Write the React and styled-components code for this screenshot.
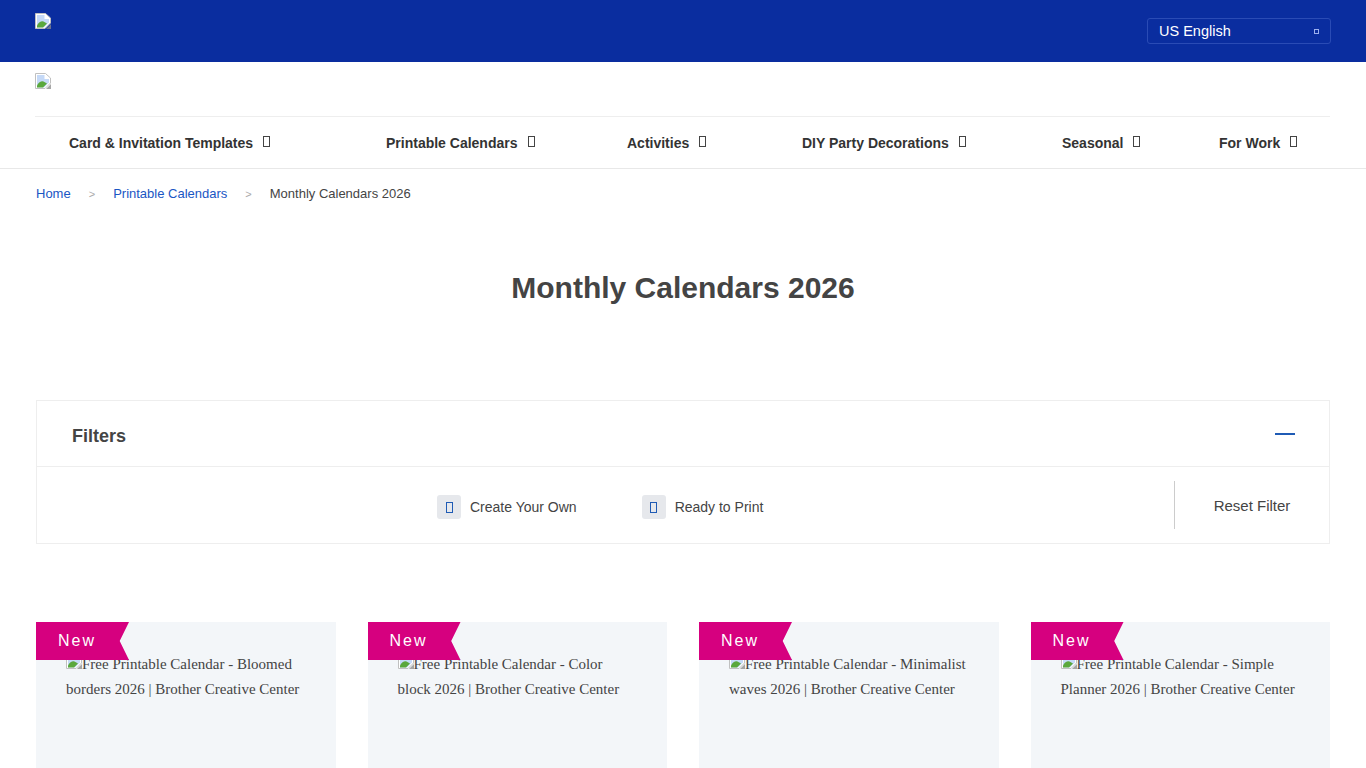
import React from "react";
import styled, { createGlobalStyle } from "styled-components";

const Global = createGlobalStyle`
  html, body { margin: 0; padding: 0; background: #fff; height: 768px; overflow: hidden; }
  body { font-family: "Liberation Sans", Arial, sans-serif; color: #444; }
`;
const TopBar = styled.header`
  height: 62px; background: #0a2d9f; display: flex; justify-content: space-between;
  padding: 13px 35px 0; box-sizing: border-box;
`;
const LangSelect = styled.div`
  width: 184px; height: 26px; margin: 5px 0 0; box-sizing: border-box;
  border: 1px solid #2a4bb5; border-radius: 3px; display: flex; align-items: center;
  justify-content: space-between; padding: 0 11px 1px; color: #fff; font-size: 14.5px;
`;
const TinyBox = styled.span`
  width: 3px; height: 3px; border: 1px solid #9db0ee; display: block; margin-top: 1px;
`;
const LogoRow = styled.div`
  height: 55px; margin: 0 36px 0 35px; padding-top: 11px; box-sizing: border-box;
  border-bottom: 1px solid #eee;
`;
const NavWrap = styled.nav`
  height: 51px; border-bottom: 1px solid #e8e8e8; padding-left: 35px;
  display: grid; grid-template-columns: 317px 241px 175px 260px 157px 1fr; align-items: center;
`;
const NavItem = styled.a`
  padding-left: 34px; display: flex; align-items: center; gap: 10px;
  font-size: 14px; font-weight: 700; color: #333;
`;
const Tofu = styled.span`
  width: 5px; height: 9px; border: 1px solid ${p => p.$color || "#444"}; display: block; flex: none;
  margin: ${p => p.$margin || "-2px 0 0"};
`;
const Crumbs = styled.div`
  display: flex; align-items: center; height: 49px; padding: 0 36px; font-size: 13px;
`;
const CrumbLink = styled.a` color: #1a56c4; `;
const CrumbSep = styled.span` color: #aaa; font-size: 11px; margin: 0 18px; `;
const CrumbText = styled.span` color: #444; `;
const Title = styled.h1`
  margin: 51px 0 0; height: 37px; line-height: 37px; text-align: center;
  font-size: 30px; font-weight: 700; color: #444;
`;
const FilterBox = styled.section`
  margin: 94px 36px 0; height: 144px; box-sizing: border-box; border: 1px solid #eee;
`;
const FilterHead = styled.div`
  height: 65px; border-bottom: 1px solid #eee; padding: 0 34px 0 35px;
  display: flex; align-items: center; justify-content: space-between;
`;
const FilterTitle = styled.div` font-size: 18px; font-weight: 700; color: #444; margin-top: 5px; `;
const Minus = styled.div` width: 20px; height: 2px; background: #1f5bb5; margin-top: 1px; `;
const FilterBody = styled.div`
  height: 76px; display: flex; align-items: center;
`;
const Options = styled.div` display: flex; gap: 65px; margin-left: 400px; flex: 1; padding-top: 4px; `;
const Option = styled.div` display: flex; align-items: center; gap: 9px; font-size: 14px; color: #444; `;
const CheckBox = styled.span`
  width: 24px; height: 24px; background: #e6e8ec; border-radius: 3px;
  display: flex; align-items: center; justify-content: center;
`;
const Reset = styled.div`
  width: 155px; height: 48px; border-left: 1px solid #ccc; box-sizing: border-box;
  display: flex; align-items: center; justify-content: center; font-size: 15px; color: #444;
`;
const Cards = styled.div`
  margin: 78px 36px 0; display: grid; grid-template-columns: repeat(4, 1fr); gap: 32px;
`;
const Card = styled.article`
  position: relative; height: 146px; background: #f3f6f9; padding: 30px 30px 0;
  box-sizing: border-box; font-family: "Liberation Serif", "Times New Roman", serif;
  font-size: 15px; line-height: 25px; color: #444;
`;
const Badge = styled.div`
  position: absolute; left: 0; top: 0; width: 93px; height: 38px; background: #d6007f;
  clip-path: polygon(0 0, 100% 0, 90% 50%, 100% 100%, 0 100%);
  font-family: "Liberation Sans", Arial, sans-serif; color: #fff; font-size: 16px;
  line-height: 38px; padding-left: 22px; box-sizing: border-box; letter-spacing: 2px;
`;
const BrokenSvg = styled.svg`
  width: 16px; height: 16px; display: ${p => p.$inline ? "inline-block" : "block"};
  vertical-align: baseline;
`;

const Broken = ({ inline }) => (
  <BrokenSvg $inline={inline} viewBox="0 0 16 16">
    <path d="M0.5 15.5V0.5H10.5L15.5 5V10L10 15.5Z" fill="#fff" stroke="#c0c0c0" />
    <path d="M2 14.5V2H9.5V6H14V9.5L9 14.5Z" fill="#c5d9f7" />
    <path d="M2 14.5V12.5Q5 7.5 8.5 8.5L12 10.5 8 14.5Z" fill="#5aa83c" />
    <path d="M16 11L11 16H16Z" fill="#8a8a8a" opacity="0.75" />
  </BrokenSvg>
);

const nav = ["Card & Invitation Templates", "Printable Calendars", "Activities", "DIY Party Decorations", "Seasonal", "For Work"];
const cards = [
  "Free Printable Calendar - Bloomed borders 2026 | Brother Creative Center",
  "Free Printable Calendar - Color block 2026 | Brother Creative Center",
  "Free Printable Calendar - Minimalist waves 2026 | Brother Creative Center",
  "Free Printable Calendar - Simple Planner 2026 | Brother Creative Center",
];

export default function App() {
  return (
    <>
      <Global />
      <TopBar>
        <Broken />
        <LangSelect>US English<TinyBox /></LangSelect>
      </TopBar>
      <LogoRow><Broken /></LogoRow>
      <NavWrap>
        {nav.map(n => <NavItem key={n}>{n}<Tofu /></NavItem>)}
      </NavWrap>
      <Crumbs>
        <CrumbLink>Home</CrumbLink><CrumbSep>&gt;</CrumbSep>
        <CrumbLink>Printable Calendars</CrumbLink><CrumbSep>&gt;</CrumbSep>
        <CrumbText>Monthly Calendars 2026</CrumbText>
      </Crumbs>
      <Title>Monthly Calendars 2026</Title>
      <FilterBox>
        <FilterHead><FilterTitle>Filters</FilterTitle><Minus /></FilterHead>
        <FilterBody>
          <Options>
            <Option><CheckBox><Tofu $color="#1f5bb5" $margin="0" /></CheckBox>Create Your Own</Option>
            <Option><CheckBox><Tofu $color="#1f5bb5" $margin="0" /></CheckBox>Ready to Print</Option>
          </Options>
          <Reset>Reset Filter</Reset>
        </FilterBody>
      </FilterBox>
      <Cards>
        {cards.map(c => (
          <Card key={c}>
            <Badge>New</Badge>
            <Broken inline />{c}
          </Card>
        ))}
      </Cards>
    </>
  );
}
